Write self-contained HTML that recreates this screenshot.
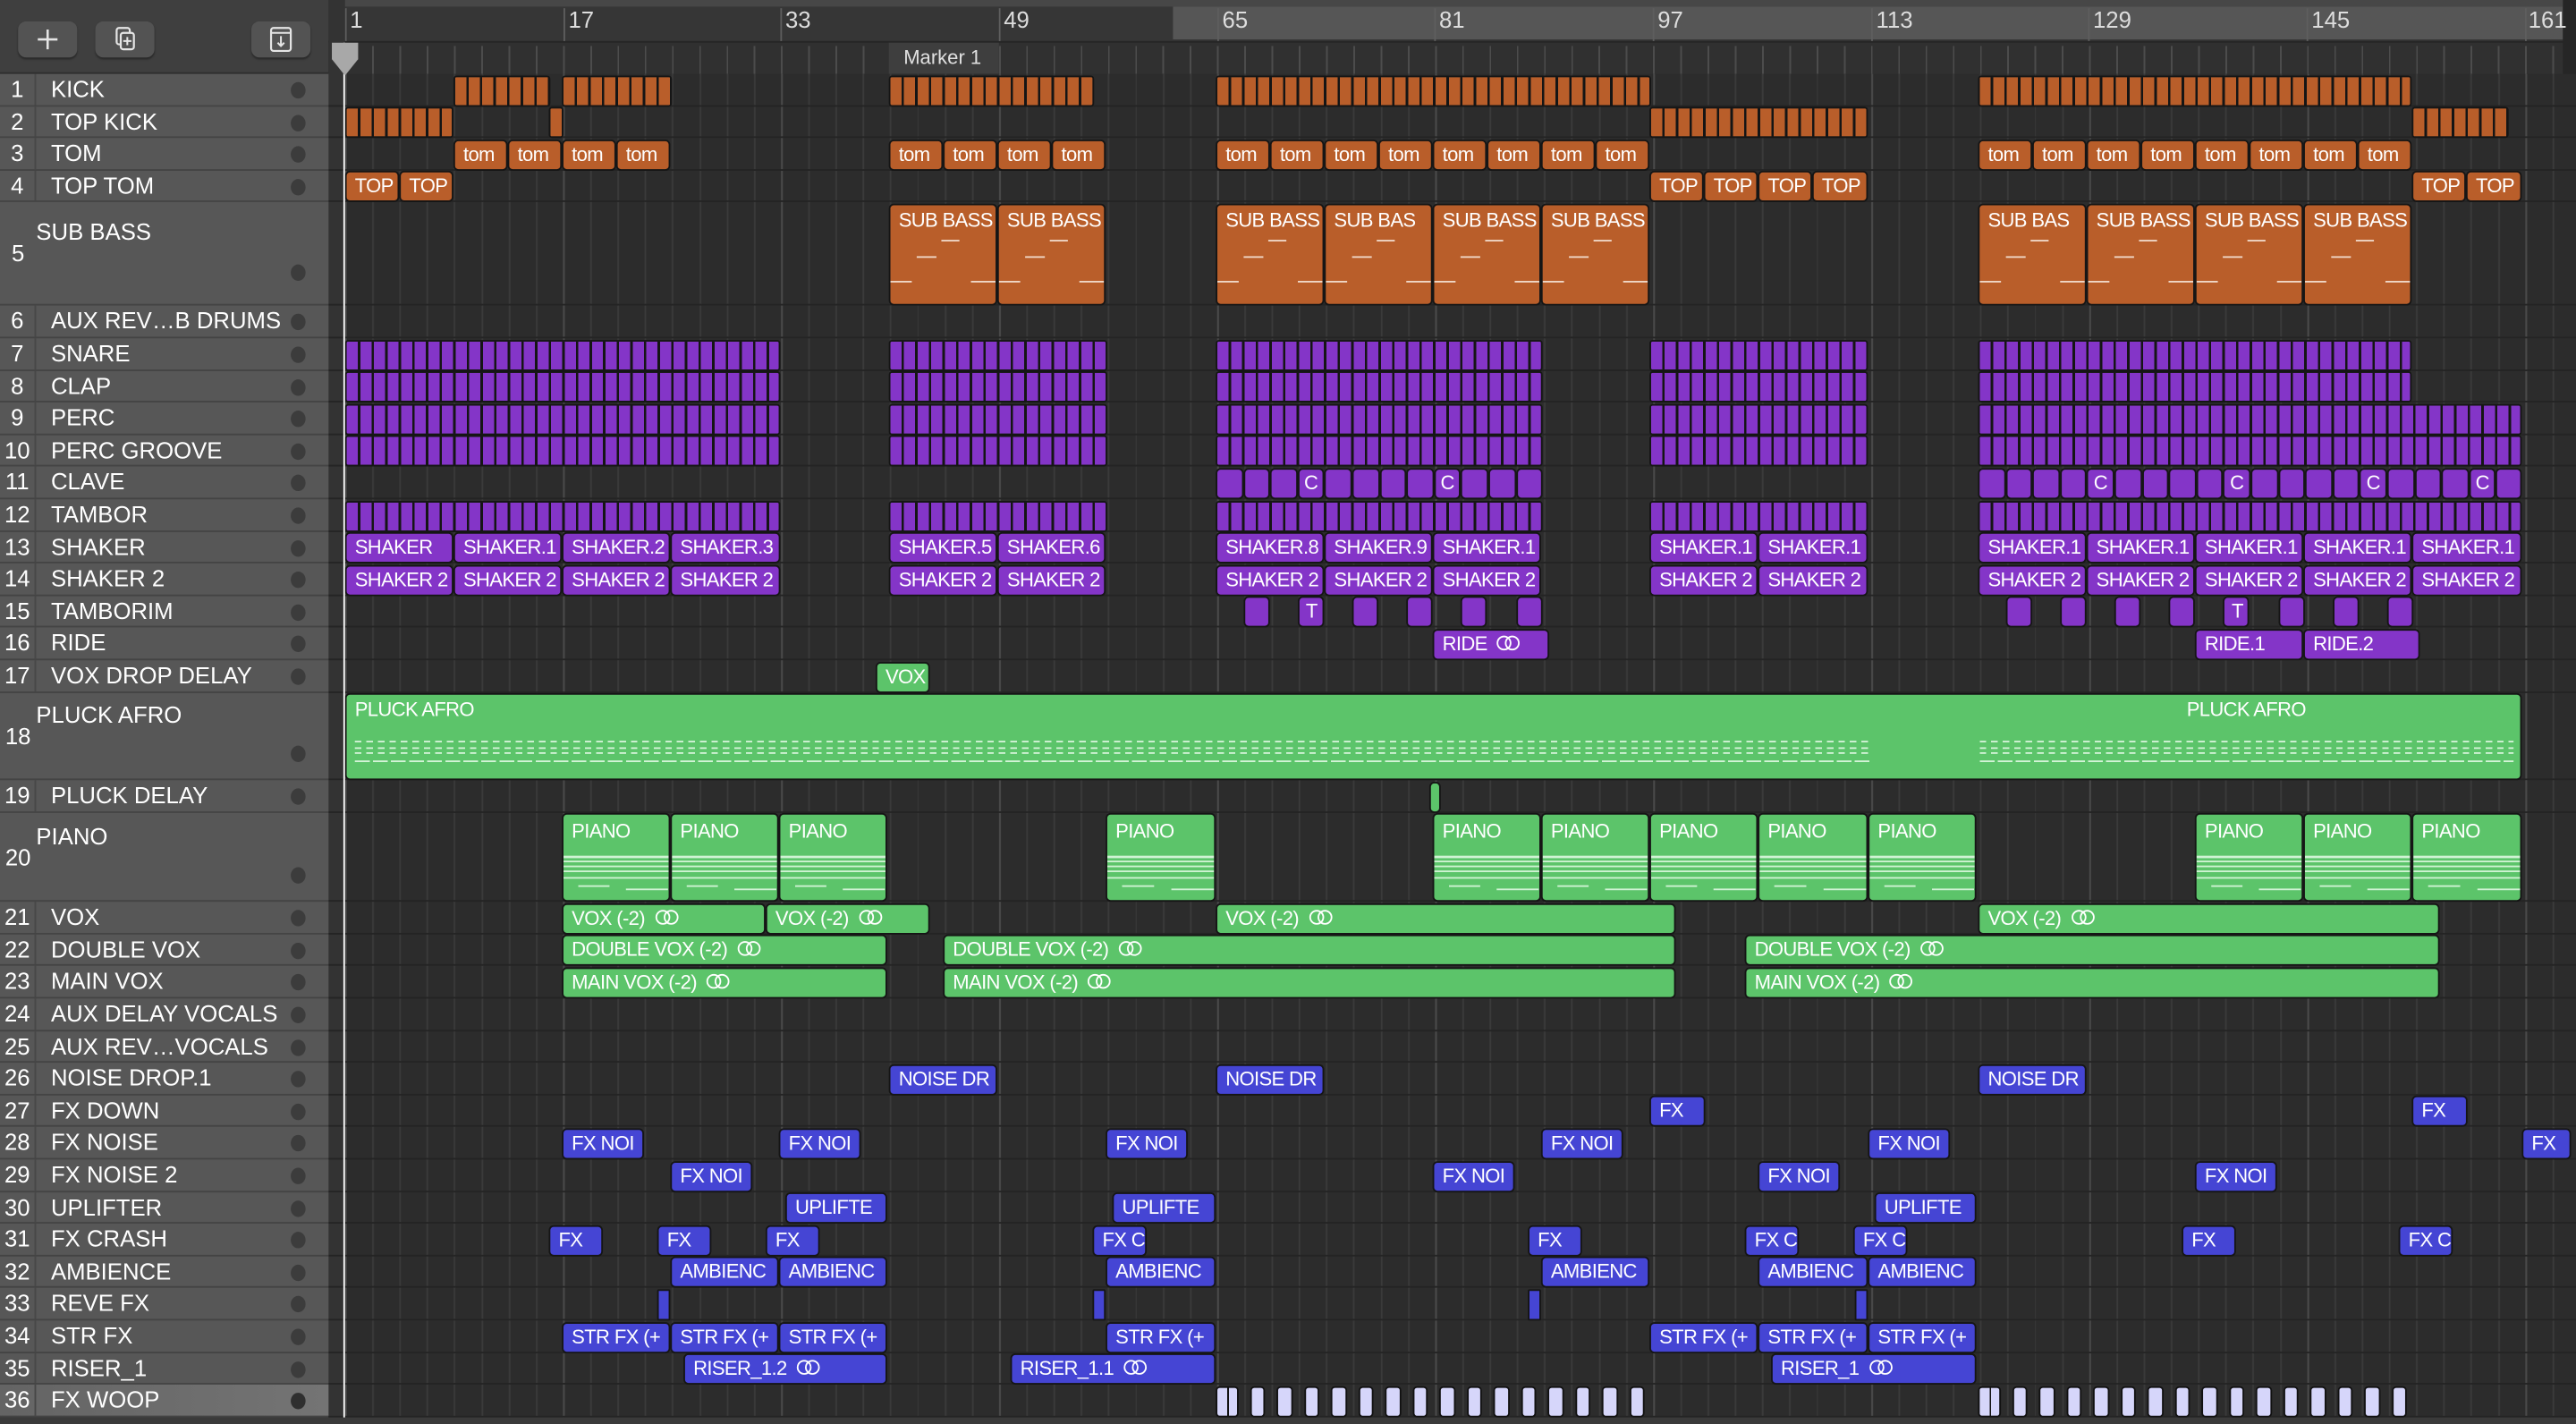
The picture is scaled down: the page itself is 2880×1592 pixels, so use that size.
<!DOCTYPE html>
<html><head><meta charset="utf-8">
<style>
*{margin:0;padding:0}
html,body{width:2880px;height:1592px;overflow:hidden;background:#2c2c2c}
#w{position:absolute;left:0;top:0;width:1568px;height:867px;transform-origin:0 0;transform:scale(1.83673,1.8362);font-family:"Liberation Sans",sans-serif;background:#2c2c2c;overflow:hidden}
.abs{position:absolute}
#grid{position:absolute;left:200px;top:45px;width:1368px;height:818px;background:
repeating-linear-gradient(90deg,#4a4a4a 0 1px,transparent 1px 132.7px) 10px 0/100% 100%,
repeating-linear-gradient(90deg,#3a3a3a 0 1px,transparent 1px 16.588px) 10px 0/100% 100%,#2c2c2c}
.row{position:absolute;left:0;width:1568px}
.hdr{position:absolute;left:0;top:0;width:200px;bottom:0;background:#575757;border-bottom:1px solid #444;box-sizing:border-box;color:#fff;font-size:14px}
.ln{position:absolute;left:200px;right:0;bottom:0;height:1px;background:#242424}
.num{position:absolute;left:0;width:22px;text-align:center;border-right:1.5px solid #474747;top:0;bottom:0;box-sizing:border-box}
.nm{position:absolute;left:31px;white-space:nowrap}
.dot{position:absolute;left:177px;width:9px;height:10px;border-radius:50%;background:#3c3c3c}
.r{position:absolute;box-sizing:border-box;border:1px solid #151515;border-radius:3px;color:#fff;font-size:12px;letter-spacing:-0.35px;line-height:17.5px;padding-left:5px;white-space:nowrap;overflow:hidden;height:19px}
.o{background:#b95e2a}.p{background:#8435c8}.g{background:#5cc46a}.b{background:#4545d4}
.ks{background:repeating-linear-gradient(90deg,#b95e2a 0 6.8px,#151515 6.8px 8.294px);border-radius:2px;padding:0}
.ps{background:repeating-linear-gradient(90deg,#8435c8 0 6.8px,#151515 6.8px 8.294px);border-radius:2px;padding:0}
.sb{height:62px;background:
linear-gradient(#f0d8c8,#f0d8c8) 31px 21px/11px 1px no-repeat,
linear-gradient(#f0d8c8,#f0d8c8) 16px 31px/12px 1px no-repeat,
linear-gradient(#f0d8c8,#f0d8c8) 0 46px/13px 1px no-repeat,
linear-gradient(#f0d8c8,#f0d8c8) right 0 top 46px/15px 1px no-repeat,#b95e2a}
.pi{height:53.5px;background:
linear-gradient(#d0f3d4,#d0f3d4) 0 25px/100% 1.5px no-repeat,
linear-gradient(#d0f3d4,#d0f3d4) 0 28px/100% 1px no-repeat,
linear-gradient(#d0f3d4,#d0f3d4) 0 31px/100% 1px no-repeat,
linear-gradient(#d0f3d4,#d0f3d4) 0 34px/100% 1px no-repeat,
linear-gradient(#d0f3d4,#d0f3d4) 0 38px/100% 1px no-repeat,
linear-gradient(#d0f3d4,#d0f3d4) 20% 43px/30% 1px no-repeat,
linear-gradient(#d0f3d4,#d0f3d4) 100% 45px/40% 1px no-repeat,#5cc46a}
.lp{display:inline-block;position:relative;width:15px;height:10px;margin-left:6px;vertical-align:-1px}
.lp:before,.lp:after{content:"";position:absolute;top:0;width:7px;height:7px;border:1.3px solid #fff;border-radius:50%}
.lp:before{left:0}.lp:after{left:5px}
.wb{position:absolute;top:844px;height:18.5px;width:9.5px;box-sizing:border-box;border:1.3px solid #111;border-radius:2.5px;background:#d6d6fa}
.btn{position:absolute;top:13px;height:22px;width:36px;border-radius:5px;background:#535353;box-shadow:0 1px 1px #2a2a2a}
.rn{position:absolute;top:4px;color:#ddd;font-size:14px}
.rt{position:absolute;top:5px;width:1px;height:20px;background:#5e5e5e}
</style></head><body><div id="w">

<div class="abs" style="left:0;top:0;width:200px;height:45px;background:#3f3f3f;border-bottom:1px solid #2e2e2e;box-sizing:border-box"></div>
<div class="btn" style="left:11px"><svg width="36" height="22" viewBox="0 0 36 22"><path d="M18 5v12M12 11h12" stroke="#e5e5e5" stroke-width="1.4"/></svg></div>
<div class="btn" style="left:58px"><svg width="36" height="22" viewBox="0 0 36 22"><rect x="13" y="4" width="8" height="10" rx="1.5" fill="none" stroke="#e5e5e5" stroke-width="1.2"/><rect x="15.5" y="7" width="8" height="10" rx="1.5" fill="#535353" stroke="#e5e5e5" stroke-width="1.2"/><path d="M19.5 9.5v5M17 12h5" stroke="#e5e5e5" stroke-width="1.1"/></svg></div>
<div class="btn" style="left:153px"><svg width="36" height="22" viewBox="0 0 36 22"><rect x="12" y="4" width="12" height="14" rx="1.5" fill="none" stroke="#e5e5e5" stroke-width="1.2"/><path d="M12 7h12M18 9v6M16 13l2 2 2-2" stroke="#e5e5e5" stroke-width="1.1" fill="none"/></svg></div>

<div class="abs" style="left:200px;top:0;width:1368px;height:25px;background:#363636;border-top:4px solid #474747;box-sizing:border-box"></div>
<div class="abs" style="left:714px;top:4px;width:846px;height:20px;background:#565656"></div>
<div class="abs" style="left:200px;top:25px;width:1368px;height:20px;background:repeating-linear-gradient(90deg,#4c4c4c 0 1px,transparent 1px 16.588px) 10px 2px/100% 18px no-repeat,#303030;border-top:1px solid #262626;box-sizing:border-box"></div>
<div class="abs" style="left:1560px;top:0;width:8px;height:867px;background:#262626"></div>
<div class="rt" style="left:210px"></div><div class="rn" style="left:213px">1</div>
<div class="rt" style="left:343px"></div><div class="rn" style="left:346px">17</div>
<div class="rt" style="left:475px"></div><div class="rn" style="left:478px">33</div>
<div class="rt" style="left:608px"></div><div class="rn" style="left:611px">49</div>
<div class="rt" style="left:741px"></div><div class="rn" style="left:744px">65</div>
<div class="rt" style="left:873px"></div><div class="rn" style="left:876px">81</div>
<div class="rt" style="left:1006px"></div><div class="rn" style="left:1009px">97</div>
<div class="rt" style="left:1139px"></div><div class="rn" style="left:1142px">113</div>
<div class="rt" style="left:1271px"></div><div class="rn" style="left:1274px">129</div>
<div class="rt" style="left:1404px"></div><div class="rn" style="left:1407px">145</div>
<div class="rt" style="left:1537px"></div><div class="rn" style="left:1539px">161</div>
<div class="abs" style="left:541px;top:26px;width:67px;height:19px;background:#3e3e3e;color:#e0e0e0;font-size:12px;line-height:18px;padding-left:9px;box-sizing:border-box">Marker 1</div>

<div id="grid"></div>
<div class="abs" style="left:200px;top:0;width:10px;height:867px;background:#333"></div>

<div class="row" style="top:45px;height:19.6px"><div class="hdr"><div class="num" style="line-height:19px">1</div><div class="nm" style="top:1px">KICK</div><div class="dot" style="top:5px"></div></div><div class="ln"></div></div>
<div class="row" style="top:64.6px;height:19.6px"><div class="hdr"><div class="num" style="line-height:19px">2</div><div class="nm" style="top:1px">TOP KICK</div><div class="dot" style="top:5px"></div></div><div class="ln"></div></div>
<div class="row" style="top:84.2px;height:19.6px"><div class="hdr"><div class="num" style="line-height:19px">3</div><div class="nm" style="top:1px">TOM</div><div class="dot" style="top:5px"></div></div><div class="ln"></div></div>
<div class="row" style="top:103.8px;height:19.6px"><div class="hdr"><div class="num" style="line-height:19px">4</div><div class="nm" style="top:1px">TOP TOM</div><div class="dot" style="top:5px"></div></div><div class="ln"></div></div>
<div class="row" style="top:123.4px;height:63px"><div class="hdr"><div class="num" style="line-height:63px;border:none">5</div><div class="nm" style="top:10px;left:22px">SUB BASS</div><div class="dot" style="top:38px"></div></div><div class="ln"></div></div>
<div class="row" style="top:186.4px;height:19.6px"><div class="hdr"><div class="num" style="line-height:19px">6</div><div class="nm" style="top:1px">AUX REV…B DRUMS</div><div class="dot" style="top:5px"></div></div><div class="ln"></div></div>
<div class="row" style="top:206px;height:19.6px"><div class="hdr"><div class="num" style="line-height:19px">7</div><div class="nm" style="top:1px">SNARE</div><div class="dot" style="top:5px"></div></div><div class="ln"></div></div>
<div class="row" style="top:225.6px;height:19.6px"><div class="hdr"><div class="num" style="line-height:19px">8</div><div class="nm" style="top:1px">CLAP</div><div class="dot" style="top:5px"></div></div><div class="ln"></div></div>
<div class="row" style="top:245.2px;height:19.6px"><div class="hdr"><div class="num" style="line-height:19px">9</div><div class="nm" style="top:1px">PERC</div><div class="dot" style="top:5px"></div></div><div class="ln"></div></div>
<div class="row" style="top:264.8px;height:19.6px"><div class="hdr"><div class="num" style="line-height:19px">10</div><div class="nm" style="top:1px">PERC GROOVE</div><div class="dot" style="top:5px"></div></div><div class="ln"></div></div>
<div class="row" style="top:284.4px;height:19.6px"><div class="hdr"><div class="num" style="line-height:19px">11</div><div class="nm" style="top:1px">CLAVE</div><div class="dot" style="top:5px"></div></div><div class="ln"></div></div>
<div class="row" style="top:304px;height:19.6px"><div class="hdr"><div class="num" style="line-height:19px">12</div><div class="nm" style="top:1px">TAMBOR</div><div class="dot" style="top:5px"></div></div><div class="ln"></div></div>
<div class="row" style="top:323.6px;height:19.6px"><div class="hdr"><div class="num" style="line-height:19px">13</div><div class="nm" style="top:1px">SHAKER</div><div class="dot" style="top:5px"></div></div><div class="ln"></div></div>
<div class="row" style="top:343.2px;height:19.6px"><div class="hdr"><div class="num" style="line-height:19px">14</div><div class="nm" style="top:1px">SHAKER 2</div><div class="dot" style="top:5px"></div></div><div class="ln"></div></div>
<div class="row" style="top:362.8px;height:19.6px"><div class="hdr"><div class="num" style="line-height:19px">15</div><div class="nm" style="top:1px">TAMBORIM</div><div class="dot" style="top:5px"></div></div><div class="ln"></div></div>
<div class="row" style="top:382.4px;height:19.6px"><div class="hdr"><div class="num" style="line-height:19px">16</div><div class="nm" style="top:1px">RIDE</div><div class="dot" style="top:5px"></div></div><div class="ln"></div></div>
<div class="row" style="top:402px;height:19.6px"><div class="hdr"><div class="num" style="line-height:19px">17</div><div class="nm" style="top:1px">VOX DROP DELAY</div><div class="dot" style="top:5px"></div></div><div class="ln"></div></div>
<div class="row" style="top:421.6px;height:53.6px"><div class="hdr"><div class="num" style="line-height:53px;border:none">18</div><div class="nm" style="top:5px;left:22px">PLUCK AFRO</div><div class="dot" style="top:32px"></div></div><div class="ln"></div></div>
<div class="row" style="top:475.2px;height:19.6px"><div class="hdr"><div class="num" style="line-height:19px">19</div><div class="nm" style="top:1px">PLUCK DELAY</div><div class="dot" style="top:5px"></div></div><div class="ln"></div></div>
<div class="row" style="top:494.8px;height:54.4px"><div class="hdr"><div class="num" style="line-height:54px;border:none">20</div><div class="nm" style="top:6px;left:22px">PIANO</div><div class="dot" style="top:33px"></div></div><div class="ln"></div></div>
<div class="row" style="top:549.2px;height:19.6px"><div class="hdr"><div class="num" style="line-height:19px">21</div><div class="nm" style="top:1px">VOX</div><div class="dot" style="top:5px"></div></div><div class="ln"></div></div>
<div class="row" style="top:568.8px;height:19.6px"><div class="hdr"><div class="num" style="line-height:19px">22</div><div class="nm" style="top:1px">DOUBLE VOX</div><div class="dot" style="top:5px"></div></div><div class="ln"></div></div>
<div class="row" style="top:588.4px;height:19.6px"><div class="hdr"><div class="num" style="line-height:19px">23</div><div class="nm" style="top:1px">MAIN VOX</div><div class="dot" style="top:5px"></div></div><div class="ln"></div></div>
<div class="row" style="top:608px;height:19.6px"><div class="hdr"><div class="num" style="line-height:19px">24</div><div class="nm" style="top:1px">AUX DELAY VOCALS</div><div class="dot" style="top:5px"></div></div><div class="ln"></div></div>
<div class="row" style="top:627.6px;height:19.6px"><div class="hdr"><div class="num" style="line-height:19px">25</div><div class="nm" style="top:1px">AUX REV…VOCALS</div><div class="dot" style="top:5px"></div></div><div class="ln"></div></div>
<div class="row" style="top:647.2px;height:19.6px"><div class="hdr"><div class="num" style="line-height:19px">26</div><div class="nm" style="top:1px">NOISE DROP.1</div><div class="dot" style="top:5px"></div></div><div class="ln"></div></div>
<div class="row" style="top:666.8px;height:19.6px"><div class="hdr"><div class="num" style="line-height:19px">27</div><div class="nm" style="top:1px">FX DOWN</div><div class="dot" style="top:5px"></div></div><div class="ln"></div></div>
<div class="row" style="top:686.4px;height:19.6px"><div class="hdr"><div class="num" style="line-height:19px">28</div><div class="nm" style="top:1px">FX NOISE</div><div class="dot" style="top:5px"></div></div><div class="ln"></div></div>
<div class="row" style="top:706px;height:19.6px"><div class="hdr"><div class="num" style="line-height:19px">29</div><div class="nm" style="top:1px">FX NOISE 2</div><div class="dot" style="top:5px"></div></div><div class="ln"></div></div>
<div class="row" style="top:725.6px;height:19.6px"><div class="hdr"><div class="num" style="line-height:19px">30</div><div class="nm" style="top:1px">UPLIFTER</div><div class="dot" style="top:5px"></div></div><div class="ln"></div></div>
<div class="row" style="top:745.2px;height:19.6px"><div class="hdr"><div class="num" style="line-height:19px">31</div><div class="nm" style="top:1px">FX CRASH</div><div class="dot" style="top:5px"></div></div><div class="ln"></div></div>
<div class="row" style="top:764.8px;height:19.6px"><div class="hdr"><div class="num" style="line-height:19px">32</div><div class="nm" style="top:1px">AMBIENCE</div><div class="dot" style="top:5px"></div></div><div class="ln"></div></div>
<div class="row" style="top:784.4px;height:19.6px"><div class="hdr"><div class="num" style="line-height:19px">33</div><div class="nm" style="top:1px">REVE FX</div><div class="dot" style="top:5px"></div></div><div class="ln"></div></div>
<div class="row" style="top:804px;height:19.6px"><div class="hdr"><div class="num" style="line-height:19px">34</div><div class="nm" style="top:1px">STR FX</div><div class="dot" style="top:5px"></div></div><div class="ln"></div></div>
<div class="row" style="top:823.6px;height:19.6px"><div class="hdr"><div class="num" style="line-height:19px">35</div><div class="nm" style="top:1px">RISER_1</div><div class="dot" style="top:5px"></div></div><div class="ln"></div></div>
<div class="row" style="top:843.2px;height:19.6px"><div class="hdr" style="background:linear-gradient(90deg,#646464,#747474)"><div class="num" style="line-height:19px">36</div><div class="nm" style="top:1px">FX WOOP</div><div class="dot" style="top:5px;background:#2f2f2f"></div></div><div class="ln"></div></div>
<div class="abs" style="left:0;top:863px;width:1568px;height:4px;background:#3a3a3a"></div>

<div class="r ks" style="left:276px;top:45.5px;width:59px"></div>
<div class="r ks" style="left:342px;top:45.5px;width:67px"></div>
<div class="r ks" style="left:541px;top:45.5px;width:125px"></div>
<div class="r ks" style="left:740px;top:45.5px;width:265px"></div>
<div class="r ks" style="left:1204px;top:45.5px;width:264px"></div>
<div class="r ks" style="left:210px;top:65.1px;width:66px"></div>
<div class="r ks" style="left:334px;top:65.1px;width:8.5px"></div>
<div class="r ks" style="left:1004px;top:65.1px;width:133px"></div>
<div class="r ks" style="left:1468px;top:65.1px;width:59px"></div>
<div class="r o" style="left:276px;top:84.7px;width:33px">tom</div><div class="r o" style="left:309px;top:84.7px;width:33px">tom</div><div class="r o" style="left:342px;top:84.7px;width:33px">tom</div><div class="r o" style="left:375px;top:84.7px;width:33px">tom</div>
<div class="r o" style="left:541px;top:84.7px;width:33px">tom</div><div class="r o" style="left:574px;top:84.7px;width:33px">tom</div><div class="r o" style="left:607px;top:84.7px;width:33px">tom</div><div class="r o" style="left:640px;top:84.7px;width:33px">tom</div>
<div class="r o" style="left:740px;top:84.7px;width:33px">tom</div><div class="r o" style="left:773px;top:84.7px;width:33px">tom</div><div class="r o" style="left:806px;top:84.7px;width:33px">tom</div><div class="r o" style="left:839px;top:84.7px;width:33px">tom</div><div class="r o" style="left:872px;top:84.7px;width:33px">tom</div><div class="r o" style="left:905px;top:84.7px;width:33px">tom</div><div class="r o" style="left:938px;top:84.7px;width:33px">tom</div><div class="r o" style="left:971px;top:84.7px;width:33px">tom</div>
<div class="r o" style="left:1204px;top:84.7px;width:33px">tom</div><div class="r o" style="left:1237px;top:84.7px;width:33px">tom</div><div class="r o" style="left:1270px;top:84.7px;width:33px">tom</div><div class="r o" style="left:1303px;top:84.7px;width:33px">tom</div><div class="r o" style="left:1336px;top:84.7px;width:33px">tom</div><div class="r o" style="left:1369px;top:84.7px;width:33px">tom</div><div class="r o" style="left:1402px;top:84.7px;width:33px">tom</div><div class="r o" style="left:1435px;top:84.7px;width:33px">tom</div>
<div class="r o" style="left:210px;top:104.3px;width:33px">TOP</div><div class="r o" style="left:243px;top:104.3px;width:33px">TOP</div>
<div class="r o" style="left:1004px;top:104.3px;width:33px">TOP</div><div class="r o" style="left:1037px;top:104.3px;width:33px">TOP</div><div class="r o" style="left:1070px;top:104.3px;width:33px">TOP</div><div class="r o" style="left:1103px;top:104.3px;width:34px">TOP</div>
<div class="r o" style="left:1468px;top:104.3px;width:33px">TOP</div><div class="r o" style="left:1501px;top:104.3px;width:34px">TOP</div>
<div class="r sb" style="left:541px;top:123.9px;width:66px;line-height:19px">SUB BASS</div><div class="r sb" style="left:607px;top:123.9px;width:66px;line-height:19px">SUB BASS</div>
<div class="r sb" style="left:740px;top:123.9px;width:66px;line-height:19px">SUB BASS</div><div class="r sb" style="left:806px;top:123.9px;width:66px;line-height:19px">SUB BAS</div><div class="r sb" style="left:872px;top:123.9px;width:66px;line-height:19px">SUB BASS</div><div class="r sb" style="left:938px;top:123.9px;width:66px;line-height:19px">SUB BASS</div>
<div class="r sb" style="left:1204px;top:123.9px;width:66px;line-height:19px">SUB BAS</div><div class="r sb" style="left:1270px;top:123.9px;width:66px;line-height:19px">SUB BASS</div><div class="r sb" style="left:1336px;top:123.9px;width:66px;line-height:19px">SUB BASS</div><div class="r sb" style="left:1402px;top:123.9px;width:66px;line-height:19px">SUB BASS</div>
<div class="r ps" style="left:210px;top:206.5px;width:265px"></div><div class="r ps" style="left:541px;top:206.5px;width:133px"></div><div class="r ps" style="left:740px;top:206.5px;width:199px"></div><div class="r ps" style="left:1004px;top:206.5px;width:133px"></div><div class="r ps" style="left:1204px;top:206.5px;width:264px"></div>
<div class="r ps" style="left:210px;top:226.1px;width:265px"></div><div class="r ps" style="left:541px;top:226.1px;width:133px"></div><div class="r ps" style="left:740px;top:226.1px;width:199px"></div><div class="r ps" style="left:1004px;top:226.1px;width:133px"></div><div class="r ps" style="left:1204px;top:226.1px;width:264px"></div>
<div class="r ps" style="left:210px;top:245.7px;width:265px"></div><div class="r ps" style="left:541px;top:245.7px;width:133px"></div><div class="r ps" style="left:740px;top:245.7px;width:199px"></div><div class="r ps" style="left:1004px;top:245.7px;width:133px"></div><div class="r ps" style="left:1204px;top:245.7px;width:331px"></div>
<div class="r ps" style="left:210px;top:265.3px;width:265px"></div><div class="r ps" style="left:541px;top:265.3px;width:133px"></div><div class="r ps" style="left:740px;top:265.3px;width:199px"></div><div class="r ps" style="left:1004px;top:265.3px;width:133px"></div><div class="r ps" style="left:1204px;top:265.3px;width:331px"></div>
<div class="r ps" style="left:210px;top:304.5px;width:265px"></div><div class="r ps" style="left:541px;top:304.5px;width:133px"></div><div class="r ps" style="left:740px;top:304.5px;width:199px"></div><div class="r ps" style="left:1004px;top:304.5px;width:133px"></div><div class="r ps" style="left:1204px;top:304.5px;width:331px"></div>
<div class="r p" style="left:740px;top:284.9px;width:16.6px"></div><div class="r p" style="left:756.6px;top:284.9px;width:16.6px"></div><div class="r p" style="left:773.2px;top:284.9px;width:16.6px"></div><div class="r p" style="left:789.8px;top:284.9px;width:16.6px;padding-left:3px">C</div><div class="r p" style="left:806.4px;top:284.9px;width:16.6px"></div><div class="r p" style="left:823px;top:284.9px;width:16.6px"></div><div class="r p" style="left:839.6px;top:284.9px;width:16.6px"></div><div class="r p" style="left:856.2px;top:284.9px;width:16.6px"></div><div class="r p" style="left:872.8px;top:284.9px;width:16.6px;padding-left:3px">C</div><div class="r p" style="left:889.4px;top:284.9px;width:16.6px"></div><div class="r p" style="left:906px;top:284.9px;width:16.6px"></div><div class="r p" style="left:922.6px;top:284.9px;width:16px"></div>
<div class="r p" style="left:1204px;top:284.9px;width:16.6px"></div><div class="r p" style="left:1220.6px;top:284.9px;width:16.6px"></div><div class="r p" style="left:1237.2px;top:284.9px;width:16.6px"></div><div class="r p" style="left:1253.8px;top:284.9px;width:16.6px"></div><div class="r p" style="left:1270.4px;top:284.9px;width:16.6px;padding-left:3px">C</div><div class="r p" style="left:1287px;top:284.9px;width:16.6px"></div><div class="r p" style="left:1303.6px;top:284.9px;width:16.6px"></div><div class="r p" style="left:1320.2px;top:284.9px;width:16.6px"></div><div class="r p" style="left:1336.8px;top:284.9px;width:16.6px"></div><div class="r p" style="left:1353.4px;top:284.9px;width:16.6px;padding-left:3px">C</div><div class="r p" style="left:1370px;top:284.9px;width:16.6px"></div><div class="r p" style="left:1386.6px;top:284.9px;width:16.6px"></div><div class="r p" style="left:1403.2px;top:284.9px;width:16.6px"></div><div class="r p" style="left:1419.8px;top:284.9px;width:16.6px"></div><div class="r p" style="left:1436.4px;top:284.9px;width:16.6px;padding-left:3px">C</div><div class="r p" style="left:1453px;top:284.9px;width:16.6px"></div><div class="r p" style="left:1469.6px;top:284.9px;width:16.6px"></div><div class="r p" style="left:1486.2px;top:284.9px;width:16.6px"></div><div class="r p" style="left:1502.8px;top:284.9px;width:16.6px;padding-left:3px">C</div><div class="r p" style="left:1519.4px;top:284.9px;width:16px"></div>
<div class="r p" style="left:210px;top:324.1px;width:66px">SHAKER</div><div class="r p" style="left:276px;top:324.1px;width:66px">SHAKER.1</div><div class="r p" style="left:342px;top:324.1px;width:66px">SHAKER.2</div><div class="r p" style="left:408px;top:324.1px;width:67px">SHAKER.3</div>
<div class="r p" style="left:541px;top:324.1px;width:66px">SHAKER.5</div><div class="r p" style="left:607px;top:324.1px;width:66px">SHAKER.6</div>
<div class="r p" style="left:740px;top:324.1px;width:66px">SHAKER.8</div><div class="r p" style="left:806px;top:324.1px;width:66px">SHAKER.9</div><div class="r p" style="left:872px;top:324.1px;width:66px">SHAKER.1</div>
<div class="r p" style="left:1004px;top:324.1px;width:66px">SHAKER.1</div><div class="r p" style="left:1070px;top:324.1px;width:67px">SHAKER.1</div>
<div class="r p" style="left:1204px;top:324.1px;width:66px">SHAKER.1</div><div class="r p" style="left:1270px;top:324.1px;width:66px">SHAKER.1</div><div class="r p" style="left:1336px;top:324.1px;width:66px">SHAKER.1</div><div class="r p" style="left:1402px;top:324.1px;width:66px">SHAKER.1</div><div class="r p" style="left:1468px;top:324.1px;width:67px">SHAKER.1</div>
<div class="r p" style="left:210px;top:343.7px;width:66px">SHAKER 2</div><div class="r p" style="left:276px;top:343.7px;width:66px">SHAKER 2</div><div class="r p" style="left:342px;top:343.7px;width:66px">SHAKER 2</div><div class="r p" style="left:408px;top:343.7px;width:67px">SHAKER 2</div>
<div class="r p" style="left:541px;top:343.7px;width:66px">SHAKER 2</div><div class="r p" style="left:607px;top:343.7px;width:66px">SHAKER 2</div>
<div class="r p" style="left:740px;top:343.7px;width:66px">SHAKER 2</div><div class="r p" style="left:806px;top:343.7px;width:66px">SHAKER 2</div><div class="r p" style="left:872px;top:343.7px;width:66px">SHAKER 2</div>
<div class="r p" style="left:1004px;top:343.7px;width:66px">SHAKER 2</div><div class="r p" style="left:1070px;top:343.7px;width:67px">SHAKER 2</div>
<div class="r p" style="left:1204px;top:343.7px;width:66px">SHAKER 2</div><div class="r p" style="left:1270px;top:343.7px;width:66px">SHAKER 2</div><div class="r p" style="left:1336px;top:343.7px;width:66px">SHAKER 2</div><div class="r p" style="left:1402px;top:343.7px;width:66px">SHAKER 2</div><div class="r p" style="left:1468px;top:343.7px;width:67px">SHAKER 2</div>
<div class="r p" style="left:756.6px;top:363.3px;width:16px"></div><div class="r p" style="left:789.8px;top:363.3px;width:16px;padding-left:4px">T</div><div class="r p" style="left:823px;top:363.3px;width:16px"></div><div class="r p" style="left:856.2px;top:363.3px;width:16px"></div><div class="r p" style="left:889.4px;top:363.3px;width:16px"></div><div class="r p" style="left:922.6px;top:363.3px;width:16px"></div>
<div class="r p" style="left:1220.6px;top:363.3px;width:16px"></div><div class="r p" style="left:1253.8px;top:363.3px;width:16px"></div><div class="r p" style="left:1287px;top:363.3px;width:16px"></div><div class="r p" style="left:1320.2px;top:363.3px;width:16px"></div><div class="r p" style="left:1353.4px;top:363.3px;width:16px;padding-left:4px">T</div><div class="r p" style="left:1386.6px;top:363.3px;width:16px"></div><div class="r p" style="left:1419.8px;top:363.3px;width:16px"></div><div class="r p" style="left:1453px;top:363.3px;width:16px"></div>
<div class="r p" style="left:872px;top:382.9px;width:71px">RIDE<i class="lp"></i></div>
<div class="r p" style="left:1336px;top:382.9px;width:66px">RIDE.1</div><div class="r p" style="left:1402px;top:382.9px;width:71px">RIDE.2</div>
<div class="r g" style="left:533px;top:402.5px;width:33px">VOX</div>
<div class="r g" style="left:210px;top:422.1px;width:1325px;height:52.5px;line-height:19px;background:
repeating-linear-gradient(90deg,#d4f3d8 0 4px,transparent 4px 7px) 5px 28px/924px 1px no-repeat,
repeating-linear-gradient(90deg,#d4f3d8 0 4px,transparent 4px 7px) 5px 32px/924px 1px no-repeat,
repeating-linear-gradient(90deg,#d4f3d8 0 4px,transparent 4px 7px) 5px 35px/924px 1px no-repeat,
repeating-linear-gradient(90deg,#d4f3d8 0 9px,transparent 9px 11px) 5px 40px/924px 1px no-repeat,
repeating-linear-gradient(90deg,#d4f3d8 0 4px,transparent 4px 7px) 994px 28px/325px 1px no-repeat,
repeating-linear-gradient(90deg,#d4f3d8 0 4px,transparent 4px 7px) 994px 32px/325px 1px no-repeat,
repeating-linear-gradient(90deg,#d4f3d8 0 4px,transparent 4px 7px) 994px 35px/325px 1px no-repeat,
repeating-linear-gradient(90deg,#d4f3d8 0 9px,transparent 9px 11px) 994px 40px/325px 1px no-repeat,#5cc46a">PLUCK AFRO<span style="position:absolute;left:1120px;top:0">PLUCK AFRO</span></div>
<div class="r g" style="left:870px;top:475.7px;width:7px;padding:0"></div>
<div class="r pi" style="left:342px;top:495.3px;width:66px;line-height:20px">PIANO</div><div class="r pi" style="left:408px;top:495.3px;width:66px;line-height:20px">PIANO</div><div class="r pi" style="left:474px;top:495.3px;width:66px;line-height:20px">PIANO</div>
<div class="r pi" style="left:673px;top:495.3px;width:67px;line-height:20px">PIANO</div>
<div class="r pi" style="left:872px;top:495.3px;width:66px;line-height:20px">PIANO</div><div class="r pi" style="left:938px;top:495.3px;width:66px;line-height:20px">PIANO</div><div class="r pi" style="left:1004px;top:495.3px;width:66px;line-height:20px">PIANO</div><div class="r pi" style="left:1070px;top:495.3px;width:67px;line-height:20px">PIANO</div><div class="r pi" style="left:1137px;top:495.3px;width:66px;line-height:20px">PIANO</div>
<div class="r pi" style="left:1336px;top:495.3px;width:66px;line-height:20px">PIANO</div><div class="r pi" style="left:1402px;top:495.3px;width:66px;line-height:20px">PIANO</div><div class="r pi" style="left:1468px;top:495.3px;width:67px;line-height:20px">PIANO</div>
<div class="r g" style="left:342px;top:549.7px;width:124px">VOX (-2)<i class="lp"></i></div><div class="r g" style="left:466px;top:549.7px;width:100px">VOX (-2)<i class="lp"></i></div><div class="r g" style="left:740px;top:549.7px;width:280px">VOX (-2)<i class="lp"></i></div><div class="r g" style="left:1204px;top:549.7px;width:281px">VOX (-2)<i class="lp"></i></div>
<div class="r g" style="left:342px;top:569.3px;width:198px">DOUBLE VOX (-2)<i class="lp"></i></div><div class="r g" style="left:574px;top:569.3px;width:446px">DOUBLE VOX (-2)<i class="lp"></i></div><div class="r g" style="left:1062px;top:569.3px;width:423px">DOUBLE VOX (-2)<i class="lp"></i></div>
<div class="r g" style="left:342px;top:588.9px;width:198px">MAIN VOX (-2)<i class="lp"></i></div><div class="r g" style="left:574px;top:588.9px;width:446px">MAIN VOX (-2)<i class="lp"></i></div><div class="r g" style="left:1062px;top:588.9px;width:423px">MAIN VOX (-2)<i class="lp"></i></div>
<div class="r b" style="left:541px;top:647.7px;width:66px">NOISE DR</div><div class="r b" style="left:740px;top:647.7px;width:66px">NOISE DR</div><div class="r b" style="left:1204px;top:647.7px;width:66px">NOISE DR</div>
<div class="r b" style="left:1004px;top:667.3px;width:34px">FX</div><div class="r b" style="left:1468px;top:667.3px;width:34px">FX</div>
<div class="r b" style="left:342px;top:686.9px;width:50px">FX NOI</div><div class="r b" style="left:474px;top:686.9px;width:50px">FX NOI</div><div class="r b" style="left:673px;top:686.9px;width:50px">FX NOI</div><div class="r b" style="left:938px;top:686.9px;width:50px">FX NOI</div><div class="r b" style="left:1137px;top:686.9px;width:50px">FX NOI</div><div class="r b" style="left:1535px;top:686.9px;width:30px">FX</div>
<div class="r b" style="left:408px;top:706.5px;width:50px">FX NOI</div><div class="r b" style="left:872px;top:706.5px;width:50px">FX NOI</div><div class="r b" style="left:1070px;top:706.5px;width:50px">FX NOI</div><div class="r b" style="left:1336px;top:706.5px;width:50px">FX NOI</div>
<div class="r b" style="left:478px;top:726.1px;width:62px">UPLIFTE</div><div class="r b" style="left:677px;top:726.1px;width:63px">UPLIFTE</div><div class="r b" style="left:1141px;top:726.1px;width:62px">UPLIFTE</div>
<div class="r b" style="left:334px;top:745.7px;width:33px">FX</div><div class="r b" style="left:400px;top:745.7px;width:33px">FX</div><div class="r b" style="left:466px;top:745.7px;width:33px">FX</div><div class="r b" style="left:665px;top:745.7px;width:33px">FX C</div><div class="r b" style="left:930px;top:745.7px;width:33px">FX</div><div class="r b" style="left:1062px;top:745.7px;width:33px">FX C</div><div class="r b" style="left:1128px;top:745.7px;width:33px">FX C</div><div class="r b" style="left:1328px;top:745.7px;width:33px">FX</div><div class="r b" style="left:1460px;top:745.7px;width:33px">FX C</div>
<div class="r b" style="left:408px;top:765.3px;width:66px">AMBIENC</div><div class="r b" style="left:474px;top:765.3px;width:66px">AMBIENC</div><div class="r b" style="left:673px;top:765.3px;width:67px">AMBIENC</div><div class="r b" style="left:938px;top:765.3px;width:66px">AMBIENC</div><div class="r b" style="left:1070px;top:765.3px;width:67px">AMBIENC</div><div class="r b" style="left:1137px;top:765.3px;width:66px">AMBIENC</div>
<div class="r b" style="left:400px;top:784.9px;width:8px;padding:0;border-radius:1px"></div><div class="r b" style="left:665px;top:784.9px;width:8px;padding:0;border-radius:1px"></div><div class="r b" style="left:930px;top:784.9px;width:8px;padding:0;border-radius:1px"></div><div class="r b" style="left:1129px;top:784.9px;width:8px;padding:0;border-radius:1px"></div>
<div class="r b" style="left:342px;top:804.5px;width:66px">STR FX (+</div><div class="r b" style="left:408px;top:804.5px;width:66px">STR FX (+</div><div class="r b" style="left:474px;top:804.5px;width:66px">STR FX (+</div><div class="r b" style="left:673px;top:804.5px;width:67px">STR FX (+</div><div class="r b" style="left:1004px;top:804.5px;width:66px">STR FX (+</div><div class="r b" style="left:1070px;top:804.5px;width:67px">STR FX (+</div><div class="r b" style="left:1137px;top:804.5px;width:66px">STR FX (+</div>
<div class="r b" style="left:416px;top:824.1px;width:124px">RISER_1.2<i class="lp"></i></div><div class="r b" style="left:615px;top:824.1px;width:125px">RISER_1.1<i class="lp"></i></div><div class="r b" style="left:1078px;top:824.1px;width:125px">RISER_1<i class="lp"></i></div>

<!-- row36 woop -->
<div class="wb" style="left:740px;width:14px;background:linear-gradient(90deg,#d6d6fa 0 6px,#111 6px 7px,#d6d6fa 7px)"></div>
<div class="wb" style="left:760.5px"></div><div class="wb" style="left:777px"></div><div class="wb" style="left:793.5px"></div><div class="wb" style="left:810px"></div><div class="wb" style="left:826.5px"></div><div class="wb" style="left:843px"></div><div class="wb" style="left:859.5px"></div><div class="wb" style="left:876px"></div><div class="wb" style="left:892.5px"></div><div class="wb" style="left:909px"></div><div class="wb" style="left:925.5px"></div><div class="wb" style="left:942px"></div><div class="wb" style="left:958.5px"></div><div class="wb" style="left:975px"></div><div class="wb" style="left:991.5px"></div>
<div class="wb" style="left:1204px;width:14px;background:linear-gradient(90deg,#d6d6fa 0 6px,#111 6px 7px,#d6d6fa 7px)"></div>
<div class="wb" style="left:1224.5px"></div><div class="wb" style="left:1241px"></div><div class="wb" style="left:1257.5px"></div><div class="wb" style="left:1274px"></div><div class="wb" style="left:1290.5px"></div><div class="wb" style="left:1307px"></div><div class="wb" style="left:1323.5px"></div><div class="wb" style="left:1340px"></div><div class="wb" style="left:1356.5px"></div><div class="wb" style="left:1373px"></div><div class="wb" style="left:1389.5px"></div><div class="wb" style="left:1406px"></div><div class="wb" style="left:1422.5px"></div><div class="wb" style="left:1439px"></div><div class="wb" style="left:1455.5px"></div>

<div class="abs" style="left:208.5px;top:26px;width:1.3px;height:837px;background:#fff"></div>
<svg class="abs" style="left:200px;top:25px" width="20" height="22" viewBox="0 0 20 22"><path d="M2 1h16v10l-8 10-8-10z" fill="#a8a8a8"/></svg>
</div></body></html>
